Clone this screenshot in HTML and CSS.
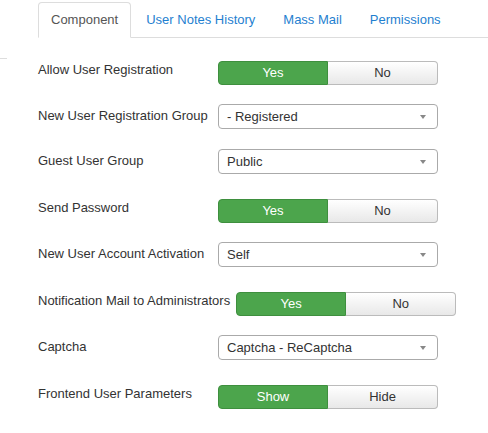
FILE: index.html
```html
<!DOCTYPE html>
<html>
<head>
<meta charset="utf-8">
<link rel="stylesheet" href="styles.css">
</head>
<body>
<div class="page">
  <div class="edge"><div class="edge-line"></div></div>
  <div class="main">
    <ul class="tabs">
      <li class="tab active">Component</li>
      <li class="tab">User Notes History</li>
      <li class="tab">Mass Mail</li>
      <li class="tab">Permissions</li>
    </ul>
    <form class="form">
      <div class="row row-btn">
        <label class="label">Allow User Registration</label>
        <div class="btn-group"><span class="btn yes">Yes</span><span class="btn">No</span></div>
      </div>
      <div class="row row-sel">
        <label class="label">New User Registration Group</label>
        <div class="select"><span>- Registered</span><span class="arrow"></span></div>
      </div>
      <div class="row row-sel">
        <label class="label">Guest User Group</label>
        <div class="select"><span>Public</span><span class="arrow"></span></div>
      </div>
      <div class="row row-btn">
        <label class="label">Send Password</label>
        <div class="btn-group"><span class="btn yes">Yes</span><span class="btn">No</span></div>
      </div>
      <div class="row row-sel">
        <label class="label">New User Account Activation</label>
        <div class="select"><span>Self</span><span class="arrow"></span></div>
      </div>
      <div class="row row-btn">
        <label class="label">Notification Mail to Administrators</label>
        <div class="btn-group"><span class="btn yes">Yes</span><span class="btn">No</span></div>
      </div>
      <div class="row row-sel">
        <label class="label">Captcha</label>
        <div class="select"><span>Captcha - ReCaptcha</span><span class="arrow"></span></div>
      </div>
      <div class="row row-btn">
        <label class="label">Frontend User Parameters</label>
        <div class="btn-group"><span class="btn yes">Show</span><span class="btn">Hide</span></div>
      </div>
    </form>
  </div>
</div>
</body>
</html>
```
FILE: styles.css
```css
html, body {
  margin: 0;
  padding: 0;
  background: #fff;
}
body {
  font-family: "Liberation Sans", Arial, sans-serif;
  font-size: 13px;
  line-height: 18px;
  color: #333;
}
.page {
  display: flex;
}
.edge {
  width: 7px;
  flex-shrink: 0;
}
.edge-line {
  margin-top: 58px;
  height: 1px;
  background: #ddd;
}
.main {
  flex: 1;
  margin-left: 31px;
}
.tabs {
  list-style: none;
  margin: 2px 0 0 0;
  padding: 0;
  display: flex;
  border-bottom: 1px solid #ddd;
}
.tab {
  padding: 8px 12px;
  line-height: 18px;
  margin-right: 2px;
  margin-bottom: -1px;
  border: 1px solid transparent;
  border-radius: 4px 4px 0 0;
  color: #1f7fd0;
}
.tab.active {
  border-color: #ddd #ddd transparent;
  background: #fff;
  color: #555;
}
.form {
  margin-top: 18px;
}
.row {
  display: flex;
  align-items: flex-start;
}
.label {
  box-sizing: border-box;
  min-width: 180px;
  padding-right: 6px;
  white-space: nowrap;
  flex-shrink: 0;
  color: #333;
}
.row-btn {
  margin-bottom: 19px;
}
.row-btn .label {
  padding-top: 5px;
}
.row-btn .btn-group {
  margin-top: 5px;
}
.row-sel {
  margin-bottom: 20px;
}
.row-sel .label {
  padding-top: 3px;
}
.btn-group {
  display: flex;
  width: 220px;
}
.btn {
  box-sizing: border-box;
  width: 110px;
  height: 24px;
  line-height: 22px;
  text-align: center;
  font-size: 13px;
  color: #333;
  border: 1px solid #bbb;
  background: linear-gradient(#fff, #e8e8e8);
}
.btn:first-child {
  border-radius: 4px 0 0 4px;
}
.btn:last-child {
  border-radius: 0 4px 4px 0;
  border-left: none;
}
.btn.yes {
  background: #4ca54c;
  border-color: #3e8f3e;
  color: #fff;
}
.select {
  box-sizing: border-box;
  width: 220px;
  height: 25px;
  border: 1px solid #aaa;
  border-radius: 4px;
  background: #fff;
  display: flex;
  align-items: center;
  justify-content: space-between;
  padding: 0 11px 0 8px;
  color: #333;
}
.arrow {
  width: 0;
  height: 0;
  border-left: 3px solid transparent;
  border-right: 3px solid transparent;
  border-top: 4px solid #888;
}
```
